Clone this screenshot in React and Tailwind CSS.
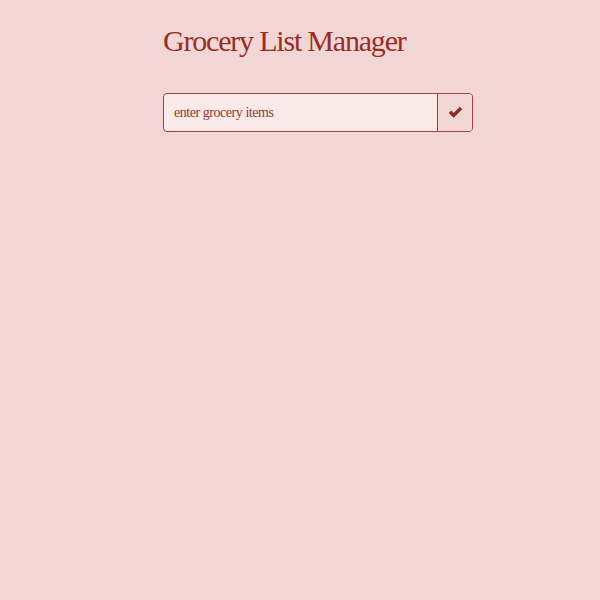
import React from "react";

export default function App() {
  return (
    <div className="min-h-[600px] w-full bg-[#f2d6d5]" style={{ fontFamily: '"Liberation Serif", serif' }}>
      <div className="ml-[163px] w-[310px] pt-[23px]">
        <h1 className="m-0 text-[30px] leading-[36px] tracking-[-1.2px] text-[#962f27] whitespace-nowrap">Grocery List Manager</h1>
        <div className="mt-[34px] flex h-[39px] rounded-[4px] border border-[#a2413a] bg-[#f9e9e8] overflow-hidden">
          <input
            className="flex-1 min-w-0 bg-transparent px-[10px] text-[14px] tracking-[-0.45px] text-[#8e3a33] placeholder:text-[#8e3a33] outline-none"
            style={{ fontFamily: '"Liberation Serif", serif' }}
            placeholder="enter grocery items"
          />
          <button className="flex w-[35px] items-center justify-center border-l border-[#a2413a] bg-[#f2d6d5]">
            <svg width="15" height="13" viewBox="0 0 16 13">
              <path d="M0.8 7 L3.4 4.4 L6 7 L12.6 0.4 L15.2 3 L6 12.2 Z" fill="#8f2a22" />
            </svg>
          </button>
        </div>
      </div>
    </div>
  );
}
